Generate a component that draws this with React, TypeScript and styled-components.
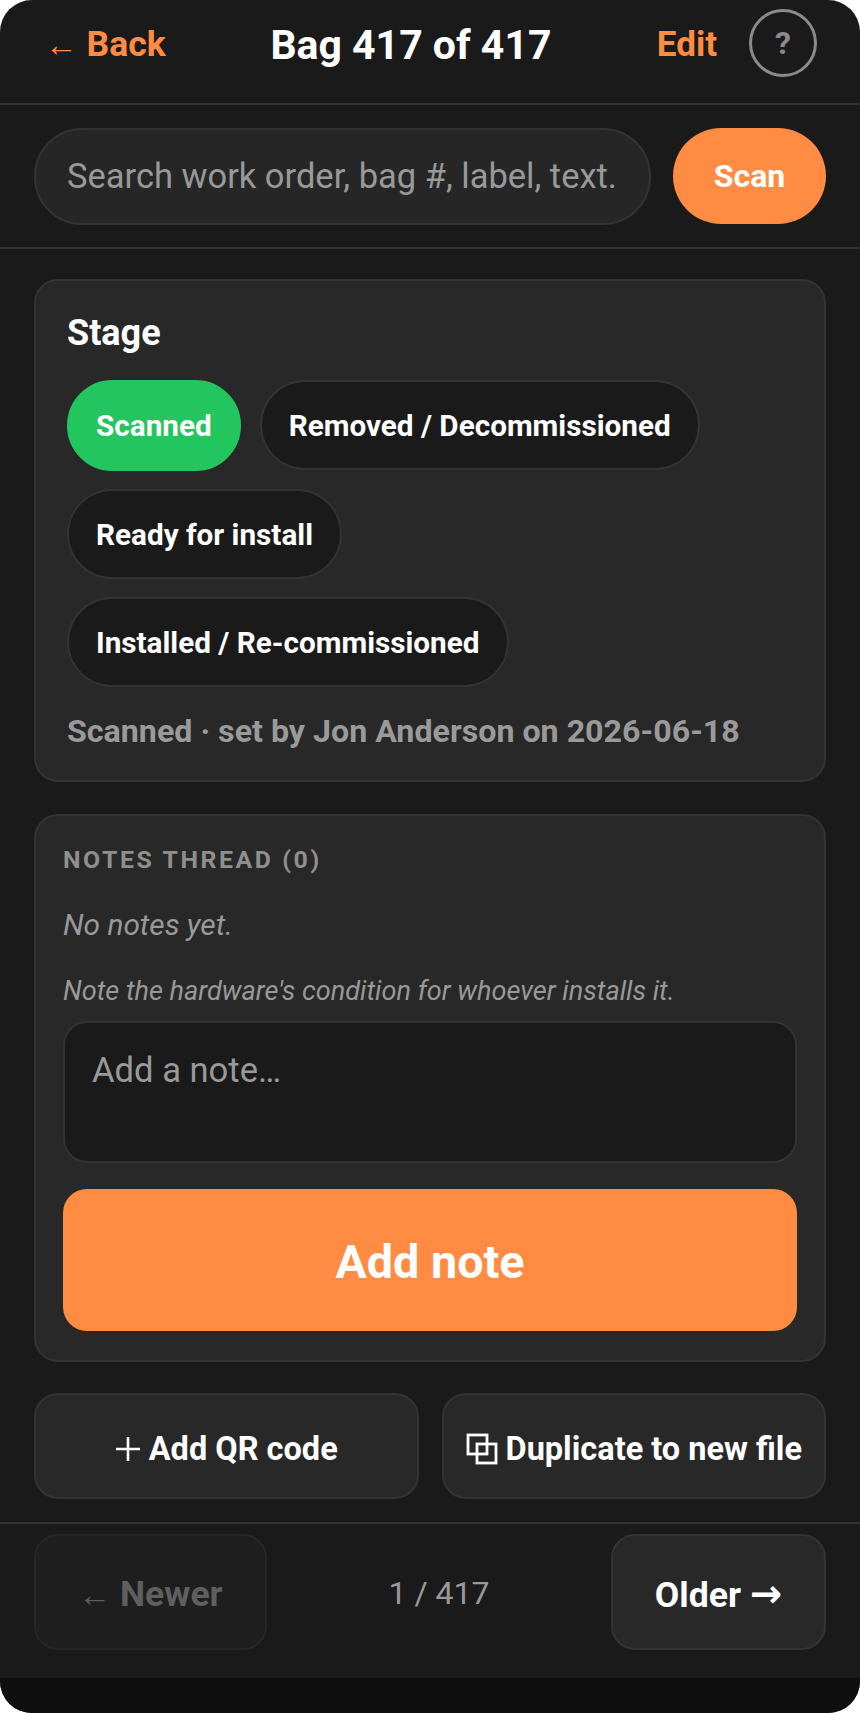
import styled, { createGlobalStyle } from 'styled-components';

const GlobalStyle = createGlobalStyle`
    html, body {
        margin: 0;
        padding: 0;
        background: #ffffff;
        font-family: Roboto, 'Liberation Sans', sans-serif;
    }
    * {
        box-sizing: border-box;
    }
`;

const ORANGE = '#ff8c42';
const BORDER = '#333333';

const Frame = styled.div`
    width: 860px;
    height: 1713px;
    display: flex;
    flex-direction: column;
    background: #1a1a1a;
    border-radius: 32px;
    overflow: hidden;
`;

const Header = styled.header`
    height: 105px;
    flex-shrink: 0;
    display: flex;
    align-items: center;
    padding: 0 43px 18px 45px;
    border-bottom: 2px solid ${BORDER};
`;

const BackLink = styled.a`
    width: 120px;
    margin-top: 3px;
    color: ${ORANGE};
    font-size: 35.5px;
    font-weight: 700;
    white-space: nowrap;
`;

const SmallArrow = styled.span`
    font-size: 0.92em;
`;

const BoldArrow = styled.span`
    font-family: 'DejaVu Sans', sans-serif;
    font-size: 1.08em;
`;

const Title = styled.h1`
    flex: 1;
    margin: 4px 0 0;
    color: #ffffff;
    font-size: 41px;
    font-weight: 700;
    text-align: center;
`;

const EditLink = styled.a`
    margin: 3px 32px 0 0;
    color: ${ORANGE};
    font-size: 35px;
    font-weight: 700;
`;

const HelpButton = styled.button`
    width: 68px;
    height: 68px;
    flex-shrink: 0;
    border-radius: 50%;
    border: 3px solid #8a8a8a;
    background: transparent;
    color: #8a8a8a;
    font-family: inherit;
    font-size: 32px;
    font-weight: 700;
    padding: 0;
`;

const SearchBar = styled.div`
    height: 144px;
    flex-shrink: 0;
    display: flex;
    align-items: center;
    gap: 22px;
    padding: 0 34px;
    border-bottom: 2px solid ${BORDER};
`;

const SearchInput = styled.input`
    flex: 1;
    min-width: 0;
    height: 97px;
    padding: 0 31px;
    border-radius: 48px;
    border: 2px solid ${BORDER};
    background: #262626;
    color: #ffffff;
    font-family: inherit;
    font-size: 34.5px;
    outline: none;
    &::placeholder {
        color: #999999;
        opacity: 1;
    }
`;

const ScanButton = styled.button`
    width: 153px;
    height: 96px;
    border: none;
    border-radius: 48px;
    background: ${ORANGE};
    color: #ffffff;
    font-family: inherit;
    font-size: 32px;
    font-weight: 700;
`;

const Content = styled.main`
    flex: 1;
    display: flex;
    flex-direction: column;
    padding: 30px 34px 0;
`;

const Card = styled.section<{ $height: number }>`
    height: ${props => props.$height}px;
    background: #282828;
    border: 2px solid ${BORDER};
    border-radius: 24px;
`;

const StageCard = styled(Card)`
    margin-bottom: 32px;
    padding: 32px 31px;
`;

const ThreadCard = styled(Card)`
    margin-bottom: 31px;
    padding: 29px 27px;
`;

const StageTitle = styled.h2`
    margin: 0 0 27px;
    color: #ffffff;
    font-size: 36px;
    line-height: 40px;
    font-weight: 700;
`;

const StageList = styled.div`
    display: flex;
    flex-wrap: wrap;
    gap: 18px 19px;
`;

const StagePill = styled.button<{ $active?: boolean }>`
    height: ${props => (props.$active ? 91 : 90)}px;
    padding: 0 27px;
    border-radius: 46px;
    border: 2px solid ${props => (props.$active ? '#22c55e' : BORDER)};
    background: ${props => (props.$active ? '#22c55e' : '#1a1a1a')};
    color: #ffffff;
    font-family: inherit;
    font-size: 29.7px;
    font-weight: 700;
`;

const StageNote = styled.p`
    margin: 26px 0 0;
    color: #9a9a9a;
    font-size: 32.2px;
    line-height: 36px;
    font-weight: 700;
`;

const ThreadLabel = styled.h3`
    margin: 0 0 32px;
    color: #8f8f8f;
    font-size: 24.8px;
    line-height: 30px;
    font-weight: 700;
    letter-spacing: 2.6px;
`;

const Muted = styled.p<{ $size: number }>`
    margin: 0 0 30px;
    color: #999999;
    font-size: ${props => props.$size}px;
    line-height: 36px;
    font-style: italic;
`;

const NoteInput = styled.textarea`
    display: block;
    width: 100%;
    height: 142px;
    margin-top: -18px;
    padding: 27px 27px;
    resize: none;
    border-radius: 24px;
    border: 2px solid ${BORDER};
    background: #1a1a1a;
    color: #ffffff;
    font-family: inherit;
    font-size: 34.6px;
    line-height: 40px;
    outline: none;
    &::placeholder {
        color: #999999;
        opacity: 1;
    }
`;

const AddNoteButton = styled.button`
    display: block;
    width: 100%;
    height: 142px;
    margin-top: 26px;
    padding: 4px 0 0;
    border: none;
    border-radius: 24px;
    background: ${ORANGE};
    color: #ffffff;
    font-family: inherit;
    font-size: 46.7px;
    font-weight: 700;
`;

const ActionRow = styled.div`
    display: grid;
    grid-template-columns: 1fr 1fr;
    gap: 23px;
`;

const ActionButton = styled.button`
    height: 106px;
    display: flex;
    align-items: center;
    justify-content: center;
    gap: 8px;
    padding: 5px 0 0;
    border-radius: 24px;
    border: 2px solid ${BORDER};
    background: #282828;
    color: #ffffff;
    font-family: inherit;
    font-size: 32.5px;
    font-weight: 700;
    white-space: nowrap;
`;

const Footer = styled.footer`
    height: 156px;
    flex-shrink: 0;
    display: flex;
    align-items: center;
    justify-content: space-between;
    padding: 9px 34px 28px;
    border-top: 2px solid ${BORDER};
`;

const NavButton = styled.button<{ $disabled?: boolean; $width: number }>`
    width: ${props => props.$width}px;
    height: 116px;
    padding: 4px 0 0;
    border-radius: 24px;
    border: 2px solid ${props => (props.$disabled ? '#262626' : BORDER)};
    background: ${props => (props.$disabled ? '#1e1e1e' : '#282828')};
    color: ${props => (props.$disabled ? '#5f5f5f' : '#ffffff')};
    font-family: inherit;
    font-size: 35.6px;
    font-weight: 700;
`;

const PageCount = styled.span`
    margin-top: 3px;
    color: #999999;
    font-size: 32px;
`;

const BottomStrip = styled.div`
    height: 35px;
    flex-shrink: 0;
    background: #0f0f0f;
`;

function PlusIcon() {
    return (
        <svg width="26" height="26" viewBox="0 0 26 26" fill="none" stroke="currentColor" strokeWidth="2.6">
            <path d="M13 1v24M1 13h24" />
        </svg>
    );
}

function DuplicateIcon() {
    return (
        <svg width="32" height="32" viewBox="0 0 32 32" fill="none" stroke="currentColor" strokeWidth="2.8">
            <rect x="2" y="2" width="19" height="19" />
            <rect x="11" y="11" width="19" height="19" />
        </svg>
    );
}

export default function App() {
    return (
        <>
            <GlobalStyle />
            <Frame>
                <Header>
                    <BackLink><SmallArrow>←</SmallArrow> Back</BackLink>
                    <Title>Bag 417 of 417</Title>
                    <EditLink>Edit</EditLink>
                    <HelpButton>?</HelpButton>
                </Header>
                <SearchBar>
                    <SearchInput placeholder="Search work order, bag #, label, text." />
                    <ScanButton>Scan</ScanButton>
                </SearchBar>
                <Content>
                    <StageCard $height={503}>
                        <StageTitle>Stage</StageTitle>
                        <StageList>
                            <StagePill $active>Scanned</StagePill>
                            <StagePill>Removed / Decommissioned</StagePill>
                            <StagePill>Ready for install</StagePill>
                            <StagePill>Installed / Re-commissioned</StagePill>
                        </StageList>
                        <StageNote>Scanned · set by Jon Anderson on 2026-06-18</StageNote>
                    </StageCard>
                    <ThreadCard $height={548}>
                        <ThreadLabel>NOTES THREAD (0)</ThreadLabel>
                        <Muted $size={29.8}>No notes yet.</Muted>
                        <Muted $size={27.1}>Note the hardware's condition for whoever installs it.</Muted>
                        <NoteInput placeholder="Add a note…" />
                        <AddNoteButton>Add note</AddNoteButton>
                    </ThreadCard>
                    <ActionRow>
                        <ActionButton><PlusIcon />Add QR code</ActionButton>
                        <ActionButton><DuplicateIcon />Duplicate to new file</ActionButton>
                    </ActionRow>
                </Content>
                <Footer>
                    <NavButton $disabled $width={233}><SmallArrow>←</SmallArrow> Newer</NavButton>
                    <PageCount>1 / 417</PageCount>
                    <NavButton $width={215}>Older <BoldArrow>→</BoldArrow></NavButton>
                </Footer>
                <BottomStrip />
            </Frame>
        </>
    );
}
